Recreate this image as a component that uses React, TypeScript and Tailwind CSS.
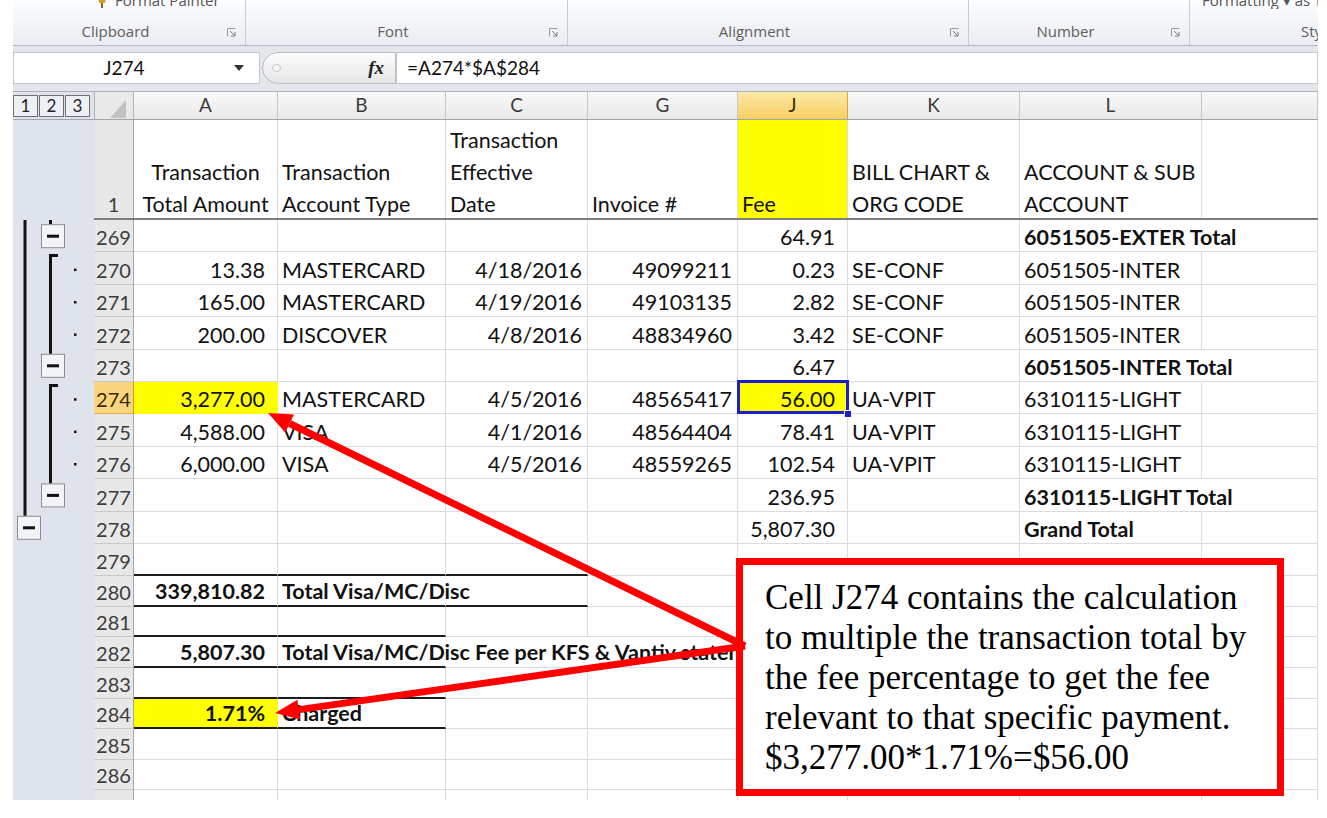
import React from "react";

type Col = { key: string; letter: string; w: string; cell: string };

const cols: Col[] = [
  { key: "a", letter: "A", w: "w-[144px]", cell: "justify-end pr-[12px]" },
  { key: "b", letter: "B", w: "w-[168px]", cell: "justify-start pl-[4px]" },
  { key: "c", letter: "C", w: "w-[142px]", cell: "justify-end pr-[5px]" },
  { key: "g", letter: "G", w: "w-[150px]", cell: "justify-end pr-[5px]" },
  { key: "j", letter: "J", w: "w-[110px]", cell: "justify-end pr-[12px]" },
  { key: "k", letter: "K", w: "w-[172px]", cell: "justify-start pl-[4px]" },
  { key: "l", letter: "L", w: "w-[182px]", cell: "justify-start pl-[4px]" },
  { key: "m", letter: "", w: "w-[116px]", cell: "justify-start pl-[4px]" },
];

type Row = {
  n: number;
  h: string;
  v?: Record<string, string>;
  bold?: string[];
  noR?: string[];
  line?: string[];
  yellow?: string[];
  sel?: string;
  hl?: boolean;
};

const TALL = "h-[32.4px]";
const SHORT = "h-[30.6px]";

const rows: Row[] = [
  { n: 269, h: TALL, v: { j: "64.91", l: "6051505-EXTER Total" }, bold: ["l"], noR: ["l"] },
  { n: 270, h: TALL, v: { a: "13.38", b: "MASTERCARD", c: "4/18/2016", g: "49099211", j: "0.23", k: "SE-CONF", l: "6051505-INTER" } },
  { n: 271, h: TALL, v: { a: "165.00", b: "MASTERCARD", c: "4/19/2016", g: "49103135", j: "2.82", k: "SE-CONF", l: "6051505-INTER" } },
  { n: 272, h: TALL, v: { a: "200.00", b: "DISCOVER", c: "4/8/2016", g: "48834960", j: "3.42", k: "SE-CONF", l: "6051505-INTER" } },
  { n: 273, h: TALL, v: { j: "6.47", l: "6051505-INTER Total" }, bold: ["l"], noR: ["l"] },
  {
    n: 274,
    h: TALL,
    v: { a: "3,277.00", b: "MASTERCARD", c: "4/5/2016", g: "48565417", j: "56.00", k: "UA-VPIT", l: "6310115-LIGHT" },
    yellow: ["a", "j"],
    sel: "j",
    hl: true,
  },
  { n: 275, h: TALL, v: { a: "4,588.00", b: "VISA", c: "4/1/2016", g: "48564404", j: "78.41", k: "UA-VPIT", l: "6310115-LIGHT" } },
  { n: 276, h: TALL, v: { a: "6,000.00", b: "VISA", c: "4/5/2016", g: "48559265", j: "102.54", k: "UA-VPIT", l: "6310115-LIGHT" } },
  { n: 277, h: TALL, v: { j: "236.95", l: "6310115-LIGHT Total" }, bold: ["l"], noR: ["l"] },
  { n: 278, h: TALL, v: { j: "5,807.30", l: "Grand Total" }, bold: ["l"] },
  { n: 279, h: TALL, line: ["a", "b", "c"] },
  { n: 280, h: SHORT, v: { a: "339,810.82", b: "Total Visa/MC/Disc" }, bold: ["a", "b"], noR: ["b"], line: ["a", "b", "c"] },
  { n: 281, h: SHORT, line: ["a", "b"] },
  {
    n: 282,
    h: SHORT,
    v: { a: "5,807.30", b: "Total Visa/MC/Disc Fee per KFS & Vantiv statement" },
    bold: ["a", "b"],
    noR: ["b", "c", "g"],
    line: ["a", "b"],
  },
  { n: 283, h: SHORT, line: ["a", "b"] },
  { n: 284, h: SHORT, v: { a: "1.71%", b: "Charged" }, bold: ["a", "b"], yellow: ["a"], line: ["a", "b"] },
  { n: 285, h: SHORT },
  { n: 286, h: SHORT },
  { n: 287, h: SHORT },
];

const headerText: Record<string, string[]> = {
  a: ["Transaction", "Total Amount"],
  b: ["Transaction", "Account Type"],
  c: ["Transaction", "Effective", "Date"],
  g: ["Invoice #"],
  j: ["Fee"],
  k: ["BILL CHART &", "ORG CODE"],
  l: ["ACCOUNT & SUB", "ACCOUNT"],
};

function Launcher() {
  return (
    <svg width="9" height="9" viewBox="0 0 9 9" className="shrink-0">
      <path d="M0.5 8.5V0.5H8.5" stroke="#9a9a9a" fill="none" />
      <path d="M3 3L7.5 7.5M8 4V8H4" stroke="#7a7a7a" fill="none" />
    </svg>
  );
}

function Group({ w, label, top, last }: { w: string; label: string; top?: React.ReactNode; last?: boolean }) {
  return (
    <div className={`${w} shrink-0 h-full flex flex-col ${last ? "" : "border-r border-[#c6ccd4]"}`}>
      <div className="h-[9px] overflow-hidden">{top}</div>
      <div className="flex-1" />
      <div className="h-[25px] flex items-center pb-[2px]">
        {last ? (
          <span className="pl-[111px] whitespace-nowrap">{label}</span>
        ) : (
          <>
            <span className="flex-1 text-center pr-[9px]">{label}</span>
            <div className="mr-[9px] mt-[2px]">
              <Launcher />
            </div>
          </>
        )}
      </div>
    </div>
  );
}

function Ribbon() {
  return (
    <div className="flex h-[46px] bg-linear-to-b from-[#fcfdfe] to-[#eaedf2] border-b border-[#b0b7c1] font-['Open_Sans',sans-serif] text-[15px] text-[#5e5e5e] overflow-hidden">
      <Group
        w="w-[233px]"
        label="Clipboard"
        top={
          <div className="-mt-[11px] pl-[82px] flex items-center gap-[6px] whitespace-nowrap text-[#555]">
            <svg width="14" height="18" viewBox="0 0 14 18">
              <path d="M3 4h8l-1 8H4z" fill="#c9a227" />
              <path d="M6 12h2v5H6z" fill="#8a6a1a" />
            </svg>
            <span>Format Painter</span>
          </div>
        }
      />
      <Group w="w-[322px]" label="Font" />
      <Group w="w-[401px]" label="Alignment" />
      <Group w="w-[221px]" label="Number" />
      <Group
        w="flex-1"
        label="Styles"
        last
        top={<div className="-mt-[11px] pl-[12px] whitespace-nowrap text-[#555]">Formatting ▾ as Table</div>}
      />
    </div>
  );
}

function FormulaBar() {
  return (
    <div className="h-[46px] bg-[#e3e7ec] border-b border-[#a8b0ba] pt-[6px] flex items-start text-[#111]">
      <div className="w-[247px] h-[32px] shrink-0 bg-white border border-[#c3c9d1] flex items-center">
        <span className="w-[220px] text-center text-[19px]">J274</span>
        <svg width="10" height="6" viewBox="0 0 10 6">
          <polygon points="0,0 10,0 5,6" fill="#333" />
        </svg>
      </div>
      <div className="ml-[2px] w-[134px] h-[32px] shrink-0 rounded-l-full border border-[#b7bec8] bg-linear-to-b from-white to-[#e4e4e4] flex items-center">
        <div className="ml-[9px] w-[9px] h-[8px] rounded-full border border-[#c9c9c9] bg-[#f6f6f6]" />
        <span className="ml-auto mr-[11px] font-['Liberation_Serif',serif] italic font-bold text-[19px] text-[#222]">fx</span>
      </div>
      <div className="flex-1 h-[32px] bg-white border border-[#c3c9d1] flex items-center pl-[10px] text-[19px]">
        =A274*$A$284
      </div>
    </div>
  );
}

function ColumnHeaders() {
  return (
    <div className="flex h-[28px] shrink-0 border-b border-[#9ea6b0]">
      <div className="w-[81px] shrink-0 bg-[#dfe3ec] flex items-center gap-[1px]">
        {["1", "2", "3"].map((d) => (
          <div
            key={d}
            className="w-[25px] h-[22px] border border-[#707070] bg-[#edf0f5] text-[17px] leading-[20px] text-center text-[#222]"
          >
            {d}
          </div>
        ))}
      </div>
      <div className="w-[40px] shrink-0 bg-[#e9e9e9] border-r border-l border-[#b3b3b3] flex items-end justify-end pr-[7px] pb-[1px]">
        <svg width="16" height="18" viewBox="0 0 16 18">
          <polygon points="16,0 16,18 0,18" fill="#c2c2c2" />
        </svg>
      </div>
      {cols.map((c) => (
        <div
          key={c.key}
          className={`${c.w} shrink-0 flex items-center justify-center text-[19px] border-r ${
            c.key === "j"
              ? "bg-linear-to-b from-[#fde9a6] to-[#f8cf60] border-r-[#dea33a] text-[#3a2c00]"
              : "bg-linear-to-b from-[#fafafa] to-[#e8e8e8] border-r-[#c6c6c6] text-[#3b3b3b]"
          }`}
        >
          {c.letter}
        </div>
      ))}
    </div>
  );
}

function HeaderRow() {
  return (
    <div className="flex h-[100px] shrink-0 border-b-2 border-[#7d7d7d]">
      <div className="w-[40px] shrink-0 flex items-end justify-center bg-[#e8e8e8] border-r border-[#a7a7a7] text-[20px] leading-[28px] text-[#3d3d3d]">
        1
      </div>
      {cols.map((c) => (
        <div
          key={c.key}
          className={`${c.w} shrink-0 flex flex-col justify-end border-r border-r-[#dadcdd] ${
            c.key === "a" ? "items-center" : "items-start pl-[4px]"
          } ${c.key === "j" ? "bg-[#ffff00]" : ""}`}
        >
          {(headerText[c.key] || []).map((t) => (
            <div key={t} className="whitespace-nowrap leading-[32px] relative top-[2px]">
              {t}
            </div>
          ))}
        </div>
      ))}
    </div>
  );
}

function Cell({ col, row }: { col: Col; row: Row }) {
  const val = row.v?.[col.key];
  const yellow = row.yellow?.includes(col.key);
  const line = row.line?.includes(col.key);
  const noR = row.noR?.includes(col.key);
  const bold = row.bold?.includes(col.key);
  const sel = row.sel === col.key;
  const rb = noR ? "border-r-transparent" : yellow && !sel ? "border-r-[#ffff00]" : "border-r-[#dadcdd]";
  const bb = line
    ? "border-b-2 border-b-[#1c1c1c]"
    : yellow
    ? "border-b border-b-[#ffff00]"
    : "border-b border-b-[#dadcdd]";
  return (
    <div className={`relative shrink-0 flex items-end border-r ${col.w} ${col.cell} ${rb} ${bb} ${yellow ? "bg-[#ffff00]" : ""}`}>
      {val && <span className={`whitespace-nowrap leading-[28px] ${bold ? "font-bold" : ""}`}>{val}</span>}
      {sel && (
        <>
          <div className="absolute -left-[1px] -top-[2px] -right-[2px] -bottom-[1px] border-[3px] border-[#1c1cd0] z-10" />
          <div className="absolute -right-[5px] -bottom-[5px] w-[8px] h-[8px] bg-[#1c1cd0] border border-white z-20" />
        </>
      )}
    </div>
  );
}

function SheetRow({ row }: { row: Row }) {
  return (
    <div className={`flex shrink-0 ${row.h}`}>
      <div
        className={`w-[40px] shrink-0 flex items-end justify-center border-r border-b text-[20px] leading-[28px] ${
          row.hl
            ? "bg-[#fbd480] border-r-[#d9992c] border-b-[#e2aa4c] text-[#3a2a00]"
            : "bg-[#e8e8e8] border-r-[#a7a7a7] border-b-[#c9c9c9] text-[#3d3d3d]"
        }`}
      >
        {row.n}
      </div>
      {cols.map((c) => (
        <Cell key={c.key} col={c} row={row} />
      ))}
    </div>
  );
}

function MinusBox({ x, y }: { x: number; y: number }) {
  return (
    <g>
      <rect x={x + 0.5} y={y + 0.5} width="23" height="23" fill="#f2f4f8" stroke="#8e8e8e" />
      <rect x={x + 6} y={y + 10.5} width="12" height="3" fill="#111" />
    </g>
  );
}

function Outline() {
  const c = (i: number) => 32.4 * i + 16.2;
  const dots = [1, 2, 3, 5, 6, 7];
  return (
    <div className="w-[81px] shrink-0 bg-[#dfe3ec] flex flex-col">
      <div className="h-[100px] shrink-0" />
      <svg width="81" height="580" viewBox="0 0 81 580">
        {/* level 1 */}
        <rect x="10.5" y="0" width="3" height={c(9) - 12} fill="#111" />
        <MinusBox x={4} y={c(9) - 12} />
        {/* level 2 */}
        <rect x="36" y="0" width="3" height={c(0) - 12} fill="#111" />
        <MinusBox x={28} y={c(0) - 12} />
        <rect x="36" y="34" width="3" height={c(4) - 12 - 34} fill="#111" />
        <rect x="36" y="34" width="9" height="3" fill="#111" />
        <MinusBox x={28} y={c(4) - 12} />
        <rect x="36" y="164" width="3" height={c(8) - 12 - 164} fill="#111" />
        <rect x="36" y="164" width="9" height="3" fill="#111" />
        <MinusBox x={28} y={c(8) - 12} />
        {dots.map((i) => (
          <rect key={i} x="61" y={c(i)} width="2.5" height="2.5" fill="#111" />
        ))}
      </svg>
    </div>
  );
}

export default function App() {
  return (
    <div className="relative w-[1327px] h-[818px] bg-white overflow-hidden font-['Lato',sans-serif] text-[21.5px] text-[#111]">
      <div className="ml-[13px] w-[1305px] flex flex-col">
        <Ribbon />
        <FormulaBar />
        <ColumnHeaders />
        <div className="h-[680px] flex overflow-hidden">
          <Outline />
          <div className="flex flex-col w-[1224px]">
            <HeaderRow />
            {rows.map((r) => (
              <SheetRow key={r.n} row={r} />
            ))}
          </div>
        </div>
      </div>

      <div className="absolute left-[736px] top-[558px] w-[548px] h-[238px] border-[7px] border-[#ff0000] bg-white pl-[22px] pt-[13px] font-['Liberation_Serif',serif] text-[35px] leading-[40px] text-black">
        <div className="whitespace-nowrap">Cell J274 contains the calculation</div>
        <div className="whitespace-nowrap">to multiple the transaction total by</div>
        <div className="whitespace-nowrap">the fee percentage to get the fee</div>
        <div className="whitespace-nowrap">relevant to that specific payment.</div>
        <div className="whitespace-nowrap">$3,277.00*1.71%=$56.00</div>
      </div>

      <svg className="absolute left-0 top-0 pointer-events-none" width="1327" height="818" viewBox="0 0 1327 818">
        <line x1="745" y1="646" x2="289.6" y2="423.5" stroke="#ff0000" strokeWidth="7" />
        <polygon points="268,413 294,414.5 285.2,432.5" fill="#ff0000" />
        <line x1="745" y1="646" x2="298.8" y2="709.6" stroke="#ff0000" strokeWidth="7" />
        <polygon points="275,713 297.4,699.7 300.2,719.5" fill="#ff0000" />
      </svg>
    </div>
  );
}
